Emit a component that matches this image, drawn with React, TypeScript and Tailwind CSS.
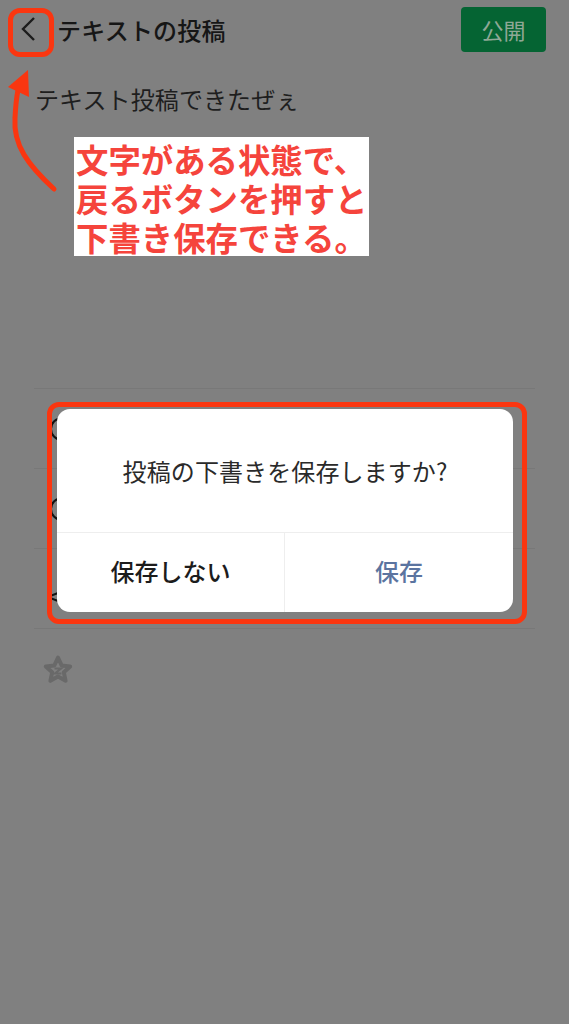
import type { ReactNode } from "react";

function Row({ children }: { children?: ReactNode }) {
  return (
    <div className="h-[80px] border-t border-[#787878] flex items-center pl-[16px] overflow-hidden">
      {children}
    </div>
  );
}

export default function App() {
  return (
    <div className="relative w-[569px] h-[1024px] bg-[#808080] overflow-hidden font-['Noto_Sans_CJK_JP','Noto_Sans',sans-serif]">
      <header className="h-[60px] flex items-center pl-[20px] pr-[23px]">
        <svg width="18" height="26" viewBox="0 0 18 26" fill="none" className="mr-[19px]">
          <path d="M14 1 L3 12 L14 23" stroke="#1c1c1c" strokeWidth="2.4" />
        </svg>
        <h1 className="text-[24px] font-medium text-[#161616] leading-none tracking-[0.2px]">テキストの投稿</h1>
        <button className="ml-auto w-[85px] h-[45px] -mt-[1px] rounded-[4px] bg-[#056433] text-[#8fa896] text-[22px] flex items-center justify-center">公開</button>
      </header>
      <p className="pl-[35px] mt-[23px] text-[24px] tracking-[0.1px] leading-[32px] text-[#1e1e1e]">テキスト投稿できたぜぇ</p>
      <div className="mt-[273px] mx-[34px]">
        <Row>
          <span className="w-[24px] h-[24px] rounded-full border-2 border-[#111]" />
        </Row>
        <Row>
          <span className="w-[24px] h-[24px] rounded-full border-2 border-[#111]" />
        </Row>
        <Row>
          <svg width="12" height="10" viewBox="0 0 12 10" fill="none" className="mt-[16px]">
            <path d="M0 4 L8 1 M0 6 L8 9" stroke="#111" strokeWidth="2" />
          </svg>
        </Row>
        <div className="border-t border-[#787878] pt-[25px] pl-[8px]">
          <svg width="32" height="32" viewBox="0 0 32 32" fill="none">
            <path d="M16 3.5 L19.6 11.4 L28.2 12.4 L21.8 18.2 L23.6 26.8 L16 22.5 L8.4 26.8 L10.2 18.2 L3.8 12.4 L12.4 11.4 Z" stroke="#696969" strokeWidth="4" strokeLinejoin="round" />
            <path d="M12.5 14.5 H19 L13 19.5 H19.5" stroke="#696969" strokeWidth="2.2" />
          </svg>
        </div>
      </div>

      {/* 注釈 */}
      <svg className="absolute left-0 top-[60px]" width="70" height="140" viewBox="0 0 70 140" fill="none">
        <path d="M54 129 C28 105 13 85 15 58 C15.5 48 16 40 18 30" stroke="#fa3610" strokeWidth="5" strokeLinecap="round" />
        <path d="M8 27 L28 10 L29 37 Z" fill="#fa3610" />
      </svg>
      <div className="absolute left-[8px] top-[8px] w-[46px] h-[49px] rounded-[12px] border-[5px] border-[#fa3610]" />
      <div className="absolute left-[74px] top-[137px] w-[295px] h-[119px] bg-white pl-[2px] pt-[2px] text-[#f5443c] text-[32.4px] font-bold leading-[39px] whitespace-nowrap">
        <div>文字がある状態で、</div>
        <div>戻るボタンを押すと</div>
        <div>下書き保存できる。</div>
      </div>

      {/* ダイアログ */}
      <div className="absolute left-[47px] top-[402px] w-[480px] h-[222px] rounded-[12px] border-[5px] border-[#fa3610] pl-[5px] pr-[9px] pt-[2px] pb-[7px] flex">
        <div className="flex-1 bg-white rounded-[13px] flex flex-col">
          <div className="h-[123px] flex items-center justify-center text-[24px] tracking-[0.1px] text-[#2a2a2a]">投稿の下書きを保存しますか?</div>
          <div className="flex-1 flex border-t border-[#eeeeee]">
            <button className="w-[228px] border-r border-[#eeeeee] pb-[4px] text-[24px] font-medium text-[#1c1c1c] flex items-center justify-center">保存しない</button>
            <button className="flex-1 pb-[4px] text-[24px] font-medium text-[#5b74a0] flex items-center justify-center">保存</button>
          </div>
        </div>
      </div>
    </div>
  );
}
